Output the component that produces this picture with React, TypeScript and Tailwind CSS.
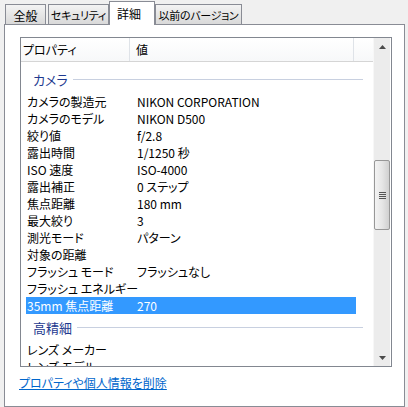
import React from "react";

const rows: [string, string][] = [
  ["カメラの製造元", "NIKON CORPORATION"],
  ["カメラのモデル", "NIKON D500"],
  ["絞り値", "f/2.8"],
  ["露出時間", "1/1250 秒"],
  ["ISO 速度", "ISO-4000"],
  ["露出補正", "0 ステップ"],
  ["焦点距離", "180 mm"],
  ["最大絞り", "3"],
  ["測光モード", "パターン"],
  ["対象の距離", ""],
  ["フラッシュ モード", "フラッシュなし"],
  ["フラッシュ エネルギー", ""],
];

const rows2: [string, string][] = [
  ["レンズ メーカー", ""],
  ["レンズ モデル", ""],
];

function Row({ name, value, selected }: { name: string; value: string; selected?: boolean }) {
  return (
    <div
      className={
        "ml-[5px] flex h-[17px] w-[330px] shrink-0 items-center whitespace-nowrap leading-[17px] " +
        (selected ? "bg-[#3399ff] text-white" : "text-black")
      }
    >
      <div className="w-[111px] pl-[1px]">{name}</div>
      <div>{value}</div>
    </div>
  );
}

function Group({ title }: { title: string }) {
  return (
    <div className="flex h-[27px] shrink-0 items-center pl-[12px] pr-[10px]">
      <span className="text-[13px] leading-[27px] text-[#1e3a8f]">{title}</span>
      <div className="ml-[5px] h-px flex-1 bg-[#c8d0e0]" />
    </div>
  );
}

export default function App() {
  return (
    <div
      className="relative h-[407px] w-[408px] overflow-hidden bg-[#f0f0f0] text-[12px] text-black [font-feature-settings:'palt']"
      style={{ fontFamily: "'Noto Sans CJK JP', 'Noto Sans', sans-serif" }}
    >
      {/* tab strip */}
      <div className="relative z-10 flex h-[24px] items-end whitespace-nowrap pl-[5px]">
        <div className="flex h-[20px] w-[41px] items-center justify-center border border-b-0 border-[#898c95] bg-gradient-to-b from-[#f3f3f3] to-[#d9d9d9] pt-[2px]">
          全般
        </div>
        <div className="ml-[2px] flex h-[20px] w-[61px] items-center justify-center border border-b-0 border-[#898c95] bg-gradient-to-b from-[#f3f3f3] to-[#d9d9d9] pt-[2px] text-[11px] tracking-[-0.3px]">
          セキュリティ
        </div>
        <div className="-mb-px flex h-[24px] w-[46px] items-start justify-start border border-b-0 border-[#898c95] bg-white pl-[7px] pt-[3px]">
          詳細
        </div>
        <div className="flex h-[20px] w-[87px] items-center justify-center border border-b-0 border-[#898c95] bg-gradient-to-b from-[#f3f3f3] to-[#d9d9d9] pt-[2px] text-[11px] tracking-[-0.3px]">
          以前のバージョン
        </div>
      </div>

      {/* panel */}
      <div className="ml-[4px] h-[383px] w-[401px] border border-[#898c95] bg-white pl-[15px] pt-[12px]">
        {/* list view */}
        <div className="flex h-[330px] w-[372px] border border-[#828790] bg-white">
          <div className="flex w-[352px] flex-col overflow-hidden">
            {/* header */}
            <div className="flex h-[24px] shrink-0 border-b border-[#d5d5d5] bg-gradient-to-b from-white to-[#f7f8f9]">
              <div className="flex w-[109px] items-center border-r border-[#dfe3e8] pl-[2px]">プロパティ</div>
              <div className="flex w-[224px] items-center border-r border-[#dfe3e8] pl-[6px]">値</div>
              <div className="flex-1" />
            </div>
            {/* items */}
            <div className="flex flex-col pt-[4px]">
              <Group title="カメラ" />
              {rows.map(([n, v]) => (
                <Row key={n} name={n} value={v} />
              ))}
              <Row name="35mm 焦点距離" value="270" selected />
              <Group title="高精細" />
              {rows2.map(([n, v]) => (
                <Row key={n} name={n} value={v} />
              ))}
            </div>
          </div>
          {/* scrollbar */}
          <div className="flex w-[17px] flex-col border-l border-[#f7f7f7] bg-[#ececec]">
            <div className="flex h-[17px] shrink-0 items-center justify-center">
              <svg width="7" height="4" viewBox="0 0 7 4">
                <path d="M3.5 0 L7 4 L0 4 Z" fill="#4a4a4a" />
              </svg>
            </div>
            <div className="h-[105px] shrink-0" />
            <div className="flex h-[70px] w-[16px] shrink-0 flex-col items-center justify-center gap-[1px] rounded-[2px] border border-[#979797] bg-gradient-to-r from-[#f3f3f3] via-[#e6e6e6] to-[#d0d0d0]">
              <div className="h-px w-[7px] bg-[#555]" />
              <div className="h-px w-[7px] bg-[#555]" />
              <div className="h-px w-[7px] bg-[#555]" />
              <div className="h-px w-[7px] bg-[#555]" />
            </div>
            <div className="flex-1" />
            <div className="flex h-[17px] shrink-0 items-center justify-center">
              <svg width="7" height="4" viewBox="0 0 7 4">
                <path d="M0 0 L7 0 L3.5 4 Z" fill="#4a4a4a" />
              </svg>
            </div>
          </div>
        </div>
        {/* link */}
        <div className="mt-[9px] -ml-px leading-[14px] text-[#0066cc] underline">プロパティや個人情報を削除</div>
      </div>
    </div>
  );
}
